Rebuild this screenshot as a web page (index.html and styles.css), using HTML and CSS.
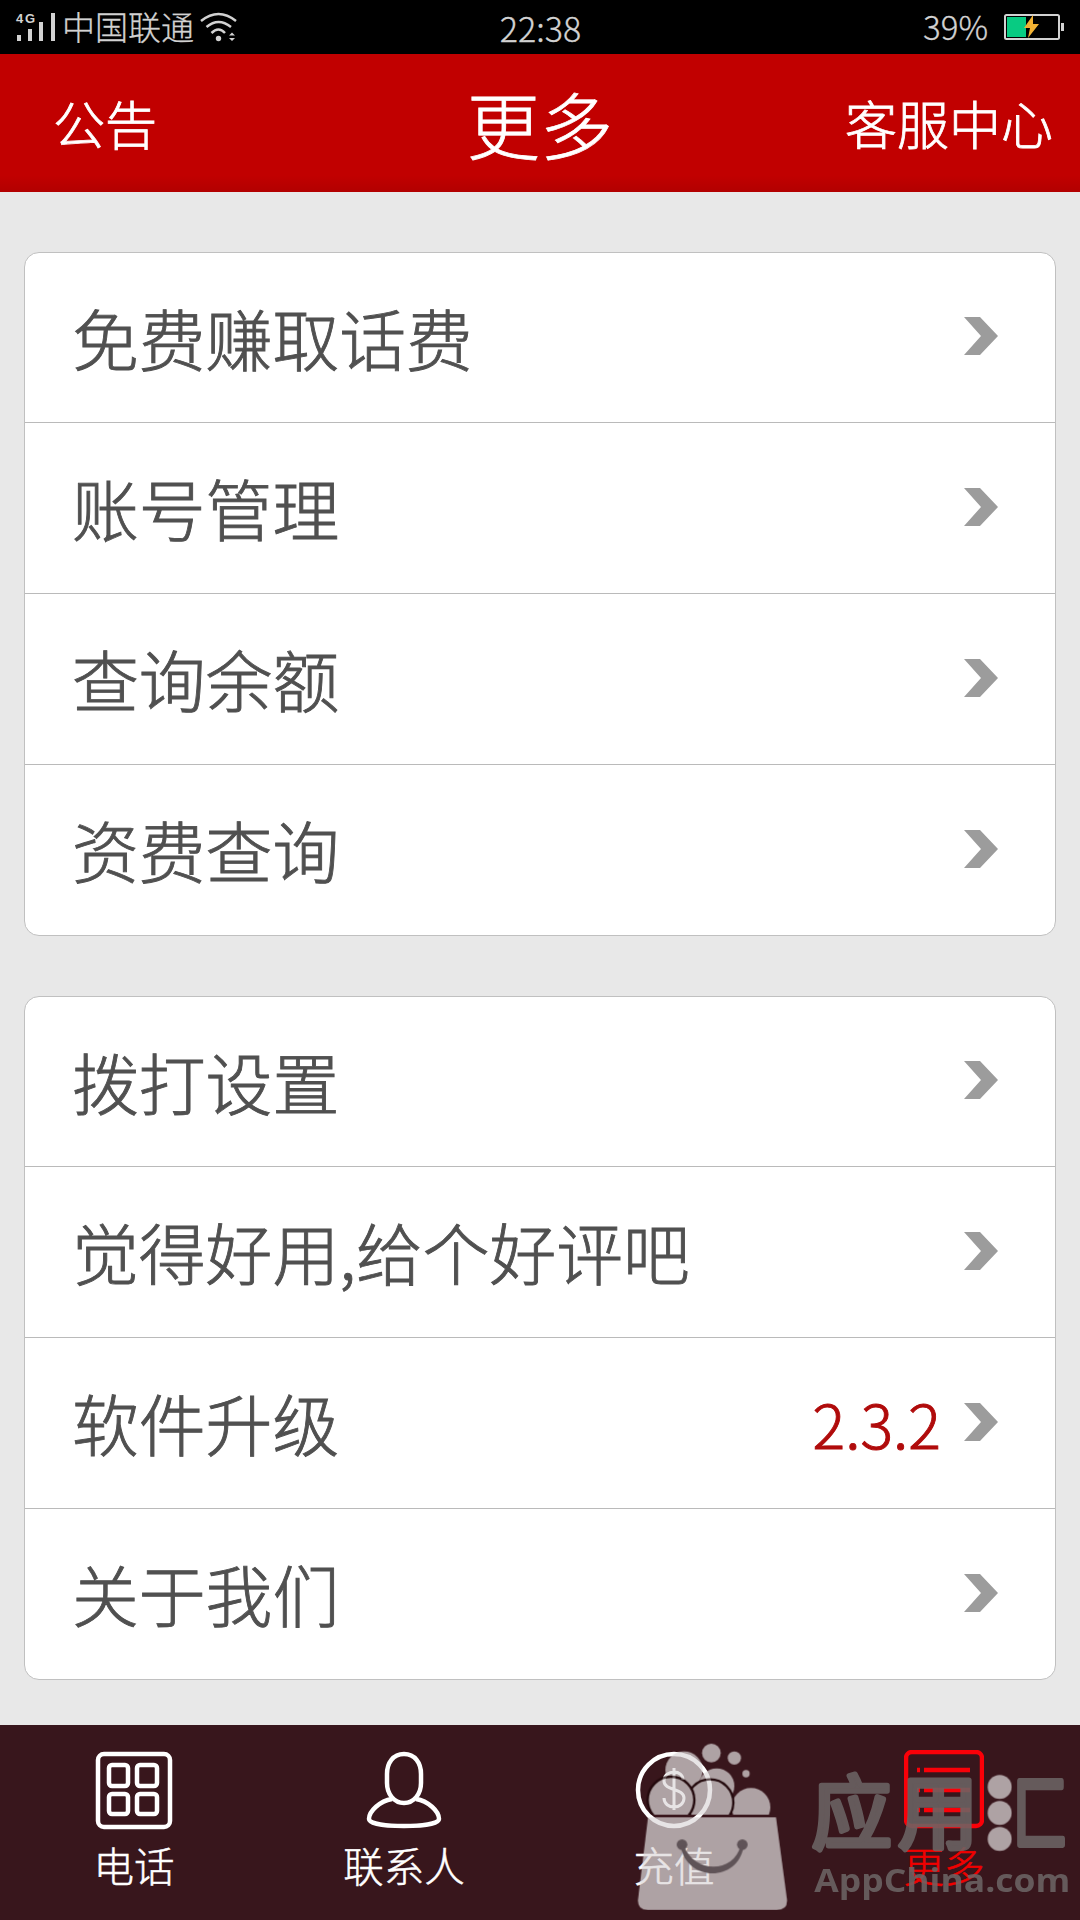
FILE: index.html
```html
<!DOCTYPE html>
<html lang="zh-CN">
<head>
  <meta charset="UTF-8">
  <meta name="viewport" content="width=device-width, initial-scale=1.0">
  <title>更多</title>
  <link rel="stylesheet" href="styles.css">
</head>
<body>

  <!-- Status bar -->
  <div class="status">
    <div class="status-left">
      <svg class="signal" width="40" height="36" viewBox="0 -3 40 36">
        <text x="0" y="11" textLength="19">4G</text>
        <path d="M1 23h4v6H1zM12 17h4v12h-4zM23 10h4v19h-4zM35 1h4v28h-4z"/>
      </svg>
      <span class="carrier">中国联通</span>
      <svg class="wifi" width="38" height="30" viewBox="0 0 38 30">
        <path d="M1 9Q18.500-5 36 9M6.500 15Q18.500 5 31 15M11.500 21Q18.500 14 25 21"/>
        <circle cx="18.500" cy="26.500" r="2.700"/>
        <path class="fill" d="M29 23.500l3-3 3 3zM29 26l3 3 3-3z"/>
      </svg>
    </div>
    <span class="clock">22:38</span>
    <div class="status-right">
      <span class="percent">39%</span>
      <svg width="61" height="26" viewBox="0 0 61 26">
        <rect x="1" y="1" width="54" height="24" rx="1.500" fill="none" stroke="#d2d2d2" stroke-width="2"/>
        <rect x="57" y="9" width="3" height="8" fill="#d2d2d2"/>
        <rect x="3" y="3" width="19" height="20" fill="#08cb82"/>
        <path d="M29 1L20 14h6l-2 10L35 10h-6z" fill="#f2b233"/>
      </svg>
    </div>
  </div>

  <div class="header">
    <span class="header-side">公告</span>
    <h1>更多</h1>
    <span class="header-side right">客服中心</span>
  </div>

  <svg class="defs" width="0" height="0">
    <symbol id="arrow" viewBox="0 0 34 38"><path d="M0 0h16l18 19-18 19H0l17-19z"/></symbol>
  </svg>

  <div class="content">
    <ul class="card">
      <li><span>免费赚取话费</span><svg class="arrow"><use href="#arrow"/></svg></li>
      <li><span>账号管理</span><svg class="arrow"><use href="#arrow"/></svg></li>
      <li><span>查询余额</span><svg class="arrow"><use href="#arrow"/></svg></li>
      <li><span>资费查询</span><svg class="arrow"><use href="#arrow"/></svg></li>
    </ul>
    <ul class="card">
      <li><span>拨打设置</span><svg class="arrow"><use href="#arrow"/></svg></li>
      <li><span>觉得好用,给个好评吧</span><svg class="arrow"><use href="#arrow"/></svg></li>
      <li><span>软件升级</span><b class="version">2.3.2</b><svg class="arrow"><use href="#arrow"/></svg></li>
      <li><span>关于我们</span><svg class="arrow"><use href="#arrow"/></svg></li>
    </ul>
  </div>

  <!-- Bottom tabs -->
  <div class="tabs">
    <div class="tab">
      <svg width="80" height="80" viewBox="0 0 80 80">
        <rect x="4" y="4" width="72" height="73" rx="6"/>
        <rect x="15" y="15" width="19" height="21" rx="3"/>
        <rect x="43" y="15" width="20" height="21" rx="3"/>
        <rect x="15" y="44" width="19" height="20" rx="3"/>
        <rect x="43" y="44" width="20" height="20" rx="3"/>
      </svg>
      <span>电话</span>
    </div>
    <div class="tab">
      <svg width="80" height="80" viewBox="0 0 80 80">
        <path d="M40 4C29 4 23 13 23 24v9c0 11 7 20 17 20s17-9 17-20v-9C57 13 51 4 40 4z"/>
        <path d="M28 49C16 51 5 61 5 69c0 5 19 7 35 7s35-2 35-7c0-8-11-18-23-20"/>
      </svg>
      <span>联系人</span>
    </div>
    <div class="tab">
      <svg width="80" height="80" viewBox="0 0 80 80">
        <circle cx="40" cy="40" r="36"/>
        <path d="M49 30c0-5-4-8-9-8s-10 3-10 9c0 10 20 7 20 17 0 6-5 9-10 9s-10-3-10-9M40 18v42" stroke-width="3"/>
      </svg>
      <span>充值</span>
    </div>
    <div class="tab active">
      <svg width="80" height="80" viewBox="0 0 80 80">
        <rect x="2" y="2" width="76" height="74" rx="6"/>
        <path d="M13 20h3M20 20h46M13 40h3M20 40h46M13 60h3M20 60h46"/>
      </svg>
      <span>更多</span>
    </div>

    <svg class="mark" width="480" height="210" viewBox="0 0 1440 630">
      <clipPath id="bag-top"><rect x="100" y="80" width="460" height="234"/></clipPath>
      <g class="mark-light">
        <path d="M144 322h384l33 247q2 31-31 31H143q-31 0-29-31z"/>
        <g class="coins" clip-path="url(#bag-top)">
          <circle cx="252" cy="180" r="56"/>
          <circle cx="350" cy="228" r="53"/>
          <circle cx="453" cy="292" r="58"/>
          <circle cx="330" cy="278" r="70"/>
          <circle cx="213" cy="270" r="70"/>
        </g>
        <circle cx="334" cy="129" r="28"/>
        <circle cx="403" cy="144" r="20"/>
        <circle cx="438" cy="191" r="11"/>
        <circle cx="1199" cy="231" r="36"/>
        <circle cx="1199" cy="309" r="36"/>
        <circle cx="1199" cy="387" r="36"/>
      </g>
      <g class="mark-smile">
        <circle cx="246" cy="404" r="16"/>
        <circle cx="427" cy="404" r="16"/>
        <path d="M242 408c18 108 172 110 189 0l-9-2c-20 85-140 85-171 0z"/>
      </g>
      <g class="mark-text">
        <text class="mark-name" x="635" y="397" textLength="240" lengthAdjust="spacingAndGlyphs">应</text>
        <text class="mark-name" x="894" y="397" textLength="240" lengthAdjust="spacingAndGlyphs">用</text>
        <text class="mark-name mark-frame" transform="translate(1238 398) scale(.69 1)">匚</text>
        <text class="mark-url" x="643" y="545" textLength="768" lengthAdjust="spacingAndGlyphs">AppChina.com</text>
      </g>
    </svg>
  </div>

</body>
</html>
```
FILE: styles.css
```css
* {
  box-sizing: border-box;
}
body {
  margin: 0;
  width: 1080px;
  height: 1920px;
  overflow: hidden;
  display: flex;
  flex-direction: column;
  background: #e8e8e8;
  color: #505050;
  font-family: "Noto Sans CJK SC", sans-serif;
  font-weight: 300;
}
.defs {
  display: none;
}

/* status bar */
.status {
  height: 54px;
  background: #000;
  color: #d2d2d2;
  display: grid;
  grid-template-columns: 1fr auto 1fr;
  align-items: center;
  padding: 0 15px 0 16px;
  font-size: 33px;
  line-height: 50px;
  -webkit-text-stroke: 0.3px;
}
.status-left,
.status-right {
  display: flex;
  align-items: center;
}
.status-right {
  justify-content: flex-end;
  gap: 16px;
}
.signal {
  overflow: visible;
  fill: #d2d2d2;
  font: bold 13px "Liberation Sans", sans-serif;
}
.carrier {
  margin: 0 6px 2px 6px;
}
.wifi {
  fill: none;
  stroke: #d2d2d2;
  stroke-width: 2.5;
}
.wifi circle,
.wifi .fill {
  fill: #d2d2d2;
  stroke: none;
}
.clock {
  padding-top: 2px;
  font-size: 34px;
}
.percent {
  margin-bottom: 3px;
}

/* title bar */
.header {
  height: 138px;
  display: grid;
  grid-template-columns: 1fr auto 1fr;
  align-items: center;
  padding: 0 27px 2px 53px;
  background: linear-gradient(#c10000 88%, #b20000);
  color: #fff;
  -webkit-text-stroke: 0.8px;
}
.header h1 {
  margin: 0 0 0 -26px;
  font-size: 73px;
  font-weight: 300;
  line-height: 136px;
}
.header-side {
  font-size: 52px;
}
.right {
  text-align: right;
}

/* lists */
.content {
  flex: 1;
  padding: 60px 24px 0;
}
.card {
  list-style: none;
  margin: 0 0 60px;
  padding: 0;
  background: #fff;
  border: 1px solid #c0c0c0;
  border-radius: 15px;
}
.card:last-child {
  margin-bottom: 0;
}
.card li {
  height: 171px;
  display: flex;
  align-items: center;
  padding: 0 57px 0 47px;
  border-bottom: 1px solid #bababa;
  font-size: 66.8px;
  line-height: 100px;
  -webkit-text-stroke: 0.9px;
}
.card li:first-child {
  height: 170px;
}
.card li:last-child {
  height: 170px;
  border-bottom: 0;
}
.card span {
  margin-bottom: 2px;
}
.arrow {
  width: 34px;
  height: 38px;
  margin-left: auto;
  margin-bottom: 3px;
  fill: #9c9c9c;
}
.version {
  margin-left: auto;
  color: #b00b0b;
  font-size: 61px;
  font-weight: 300;
}
.version + .arrow {
  margin-left: 23px;
}

/* bottom tabs */
.tabs {
  position: relative;
  flex: none;
  height: 195px;
  display: flex;
  background: #38161c;
  color: #fff;
}
.tab {
  flex: 1;
  display: flex;
  flex-direction: column;
  align-items: center;
  padding: 25px 2px 0 0;
  font-size: 40.5px;
  line-height: 70px;
  -webkit-text-stroke: 0.5px;
}
.tab svg {
  fill: none;
  stroke: #fff;
  stroke-width: 4.500;
}
.active {
  color: #f00000;
}
.active svg {
  stroke: #fa0008;
}

/* store logo over the tabs */
.mark {
  position: absolute;
  right: 0;
  bottom: 0;
}
.mark-light {
  fill: #dedadb;
  opacity: 0.72;
}
.coins {
  stroke: #1c0508;
  stroke-width: 7;
}
.coins circle:nth-child(-n+3) {
  stroke: none;
}
.mark-smile {
  fill: #5f5357;
}
.mark-text {
  fill: #6b6565;
  stroke: #6b6565;
  opacity: 0.88;
}
.mark-name {
  font-size: 240px;
  font-weight: 400;
  stroke-width: 16;
  stroke-linejoin: round;
}
.mark-frame {
  stroke-width: 20;
}
.mark-url {
  font-family: "Open Sans", "Noto Sans", sans-serif;
  font-size: 98px;
  font-weight: 700;
  stroke-width: 0;
}
```
